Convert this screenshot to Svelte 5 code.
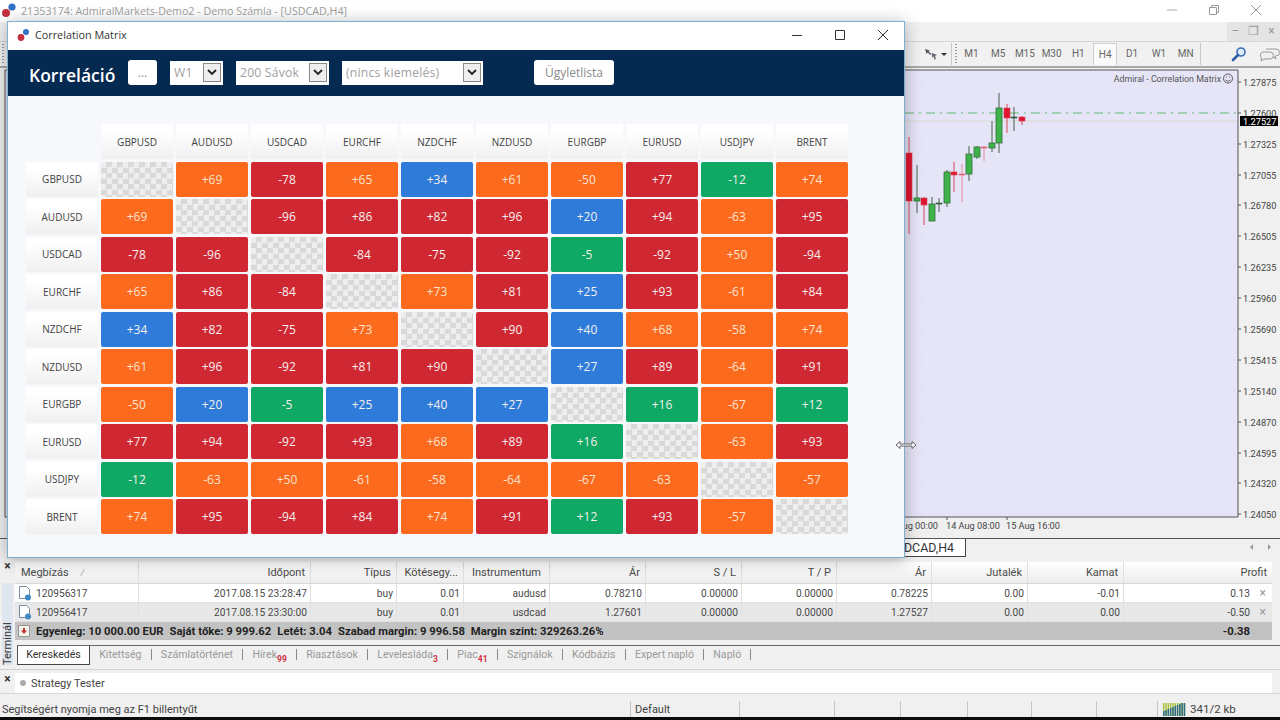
<script>
  const symbols = ['GBPUSD', 'AUDUSD', 'USDCAD', 'EURCHF', 'NZDCHF', 'NZDUSD', 'EURGBP', 'EURUSD', 'USDJPY', 'BRENT'];
  const matrix = [
    [null, 69, -78, 65, 34, 61, -50, 77, -12, 74],
    [69, null, -96, 86, 82, 96, 20, 94, -63, 95],
    [-78, -96, null, -84, -75, -92, -5, -92, 50, -94],
    [65, 86, -84, null, 73, 81, 25, 93, -61, 84],
    [34, 82, -75, 73, null, 90, 40, 68, -58, 74],
    [61, 96, -92, 81, 90, null, 27, 89, -64, 91],
    [-50, 20, -5, 25, 40, 27, null, 16, -67, 12],
    [77, 94, -92, 93, 68, 89, 16, null, -63, 93],
    [-12, -63, 50, -61, -58, -64, -67, -63, null, -57],
    [74, 95, -94, 84, 74, 91, 12, 93, -57, null]
  ];

  function level(v) {
    const a = Math.abs(v);
    if (a >= 75) return 'red';
    if (a >= 50) return 'orange';
    if (a >= 20) return 'blue';
    return 'green';
  }

  const fmt = (v) => (v > 0 ? '+' + v : '' + v);

  const periods = ['M1', 'M5', 'M15', 'M30', 'H1', 'H4', 'D1', 'W1', 'MN'];

  const priceLabels = [
    ['1.27875', 82], ['1.27600', 113], ['1.27325', 144], ['1.27055', 175],
    ['1.26780', 205], ['1.26505', 236], ['1.26235', 267], ['1.25960', 298],
    ['1.25690', 329], ['1.25415', 360], ['1.25140', 391], ['1.24870', 422],
    ['1.24595', 453], ['1.24320', 483], ['1.24050', 514]
  ];

  // x, high, low, body top, body bottom, kind
  const candles = [
    [909, 137, 234, 153, 201, 'down'],
    [917, 165, 213, 198, 201, 'up'],
    [924, 197, 225, 198, 205, 'down'],
    [932, 197, 221, 204, 221, 'up'],
    [939, 198, 212, 203, 204, 'doji'],
    [947, 170, 207, 172, 203, 'up'],
    [954, 162, 192, 172, 175, 'down'],
    [962, 164, 202, 174, 175, 'pink'],
    [969, 146, 181, 154, 174, 'up'],
    [977, 146, 159, 147, 157, 'up'],
    [984, 146, 161, 147, 148, 'pink'],
    [992, 121, 152, 143, 148, 'up'],
    [999, 93, 153, 108, 143, 'up'],
    [1007, 104, 133, 108, 118, 'down'],
    [1014, 107, 131, 117, 118, 'doji'],
    [1022, 116, 125, 117, 121, 'down']
  ];

  const columns = [
    ['Megbízás', 'l'], ['Időpont', 'r'], ['Típus', 'r'], ['Kötésegy...', 'r'], ['Instrumentum', 'c'],
    ['Ár', 'r'], ['S / L', 'r'], ['T / P', 'r'], ['Ár', 'r'], ['Jutalék', 'r'], ['Kamat', 'r'], ['Profit', 'r']
  ];

  const orders = [
    ['120956317', '2017.08.15 23:28:47', 'buy', '0.01', 'audusd', '0.78210', '0.00000', '0.00000', '0.78225', '0.00', '-0.01', '0.13'],
    ['120956417', '2017.08.15 23:30:00', 'buy', '0.01', 'usdcad', '1.27601', '0.00000', '0.00000', '1.27527', '0.00', '0.00', '-0.50']
  ];

  const termTabs = [
    ['Kitettség'], ['Számlatörténet'], ['Hírek', '99'], ['Riasztások'], ['Levelesláda', '3'],
    ['Piac', '41'], ['Szignálok'], ['Kódbázis'], ['Expert napló'], ['Napló']
  ];

  const trafficBars = [5, 6, 7, 8, 9, 10, 11, 12, 13, 14];
</script>

<div class="app">
  <header class="titlebar">
    <svg class="logo" width="20" height="20" viewBox="0 0 20 20">
      <circle cx="12" cy="6" r="3.6" fill="#3470c8" />
      <circle cx="6" cy="12" r="4" fill="#c5303f" />
    </svg>
    <span class="apptitle">21353174: AdmiralMarkets-Demo2 - Demo Számla - [USDCAD,H4]</span>
    <div class="sysbtns">
      <svg width="12" height="12" viewBox="0 0 12 12"><path d="M1 6h10" stroke="#aaa" /></svg>
      <svg width="12" height="12" viewBox="0 0 12 12"><path d="M1.500 3.500h7v7h-7zM3.500 3.500v-2h7v7h-2" fill="none" stroke="#999" /></svg>
      <svg width="12" height="12" viewBox="0 0 12 12"><path d="M1 1l10 10M11 1L1 11" stroke="#999" /></svg>
    </div>
  </header>

  <div class="mdibar">
    <div class="mdibtns">
      <span>–</span><span>❐</span><span>×</span>
    </div>
  </div>

  <div class="toolbar">
    <span class="tb-grip first-grip"></span>
    <svg class="tb-arrows" width="24" height="16" viewBox="0 0 24 16">
      <path d="M1 3l5 1.500-1.500 1 3 2.500-1 1-3-2.500-1 1.500z" fill="#555" />
      <path d="M8 7l5 2-2 1 1 3-1.500.5-1-3-1.500 1z" fill="#667" />
      <path d="M17 7h6l-3 3z" fill="#333" />
    </svg>
    <span class="tb-sep"></span>
    <span class="tb-grip"></span>
    <div class="periods">
      {#each periods as p}
        <span class="period" class:active={p === 'H4'}>{p}</span>
      {/each}
    </div>
    <span class="tb-sep"></span>
    <svg class="tb-search" width="16" height="16" viewBox="0 0 16 16">
      <circle cx="10" cy="6" r="4" fill="#dce9f7" stroke="#3a6fb5" stroke-width="1.600" />
      <path d="M7 9l-5 5" stroke="#2c5fa8" stroke-width="2.600" stroke-linecap="round" />
    </svg>
    <svg class="tb-chat" width="22" height="16" viewBox="0 0 22 16">
      <path d="M8 3h10a3 3 0 0 1 0 7h-1l1 3-4-3" fill="none" stroke="#999" />
      <path d="M5 6h7a3.500 3.500 0 0 1 0 7H6l-3 2 .5-3A3.500 3.500 0 0 1 5 6z" fill="#f0f0f0" stroke="#999" />
    </svg>
  </div>

  <div class="chart">
    <svg class="chart-svg" width="1280" height="470" viewBox="0 68 1280 470">
      <rect x="5" y="70" width="1233" height="447" fill="#e6e4f7" />
      {#each [950, 1010, 1070, 1130, 1190] as gx}
        <path d="M{gx} 70V517" stroke="#dcdaf0" stroke-dasharray="1 3" />
      {/each}
      {#each priceLabels as l}
        <path d="M905 {l[1]}H1238" stroke="#dcdaf0" stroke-dasharray="1 3" />
      {/each}
      <path d="M905 121H1238" stroke="#dcd9d2" />
      <path d="M905 113H1238" stroke="#5fbd74" stroke-dasharray="9 5 2 5" />

      {#each candles as c}
        <path
          d="M{c[0]} {c[1]}V{c[2]}"
          stroke={c[5] === 'down' ? '#d8475a' : c[5] === 'pink' ? '#e88a9c' : '#46604a'}
        />
        <rect
          class={c[5]}
          x={c[0] - 3}
          y={c[3]}
          width="6"
          height={c[4] - c[3]}
        />
      {/each}

      <path d="M5 70H1238V517H5z" fill="none" stroke="#555" />
      {#each priceLabels as l}
        <path d="M1238 {l[1]}h3" stroke="#555" />
        <text class="axis" x="1243" y={l[1] + 3.500}>{l[0]}</text>
      {/each}
      <rect x="1240" y="116" width="38" height="10" fill="#000" />
      <text class="axis last" x="1243" y="124.500">1.27527</text>

      <text class="chart-name" x="1221" y="81.500" text-anchor="end">Admiral - Correlation Matrix</text>
      <circle cx="1228" cy="78.500" r="4.500" fill="none" stroke="#555" />
      <path d="M1225.500 80q2.500 2.500 5 0M1226 77h1M1229 77h1" fill="none" stroke="#555" stroke-width=".8" />

      <path d="M947 517v3M1007 517v3" stroke="#555" />
      <text class="axis" x="938" y="528.500" text-anchor="end">13 Aug 00:00</text>
      <text class="axis" x="946" y="528.500">14 Aug 08:00</text>
      <text class="axis" x="1006" y="528.500">15 Aug 16:00</text>
    </svg>
  </div>

  <div class="chart-tabs">
    <span class="chart-tab">USDCAD,H4</span>
    <span class="tab-arrows">
      <svg width="5" height="8" viewBox="0 0 5 8"><path d="M4 1v6L1 4z" fill="#999" /></svg>
      <svg width="5" height="8" viewBox="0 0 5 8"><path d="M1 1v6l3-3z" fill="#999" /></svg>
    </span>
  </div>

  <section class="terminal">
    <aside class="term-side">
      <span class="side-x">×</span>
      <span class="side-label">Terminál</span>
    </aside>
    <div class="term-main">
      <div class="trow thead">
        {#each columns as col, i}
          <span class="tcell {col[1]}">
            {col[0]}{#if i === 0}<em class="sort">/</em>{/if}
          </span>
        {/each}
      </div>
      {#each orders as order, r}
        <div class="trow" class:alt={r === 1}>
          {#each order as val, i}
            <span class="tcell" class:r={i > 0} class:first={i === 0}>
              {#if i === 0}
                <svg class="doc" width="16" height="16" viewBox="0 0 16 16">
                  <path d="M2.500 1.500h7l3 3v9h-10z" fill="#fff" stroke="#7c8da0" />
                  <circle cx="11" cy="12.500" r="3" fill="#3b8ac4" />
                </svg>
              {/if}
              {val}
              {#if i === 11}<i class="rowx">×</i>{/if}
            </span>
          {/each}
        </div>
      {/each}
      <div class="balance">
        <svg width="12" height="12" viewBox="0 0 12 12">
          <rect x=".5" y=".5" width="11" height="11" fill="#f4f1ec" stroke="#999" />
          <path d="M6 9L3 5.500h2V3h2v2.500h2z" fill="#c5342c" />
        </svg>
        <b>Egyenleg: 10 000.00 EUR</b>
        <b>Saját tőke: 9 999.62</b>
        <b>Letét: 3.04</b>
        <b>Szabad margin: 9 996.58</b>
        <b>Margin szint: 329263.26%</b>
        <b class="sum">-0.38</b>
      </div>
      <nav class="term-tabs">
        <span class="term-tab active">Kereskedés</span>
        {#each termTabs as t}
          <span class="term-tab">{t[0]}{#if t[1]}<sub>{t[1]}</sub>{/if}</span>
          <span class="bar"></span>
        {/each}
      </nav>
    </div>
  </section>

  <section class="tester">
    <span class="side-x small">×</span>
    <div class="tester-box">
      <span class="dot"></span>
      Strategy Tester
    </div>
  </section>

  <footer class="status">
    <span class="st st-help">Segítségért nyomja meg az F1 billentyűt</span>
    <span class="st st-default">Default</span>
    <span class="st w95"></span>
    <span class="st w66"></span>
    <span class="st w67"></span>
    <span class="st w64"></span>
    <span class="st w65"></span>
    <span class="st w61"></span>
    <span class="st st-net">
      <svg width="23" height="13" viewBox="0 0 23 13">
        {#each trafficBars as h, i}
          <rect x={i * 2.300} y="0" width="1.500" height="13" fill="#a9c244" />
          <rect x={i * 2.300} y={13 - h} width="1.500" height={h} fill="#2c6a86" />
        {/each}
      </svg>
      341/2 kb
    </span>
  </footer>
  <div class="blackline"></div>

  <div class="window">
    <div class="win-title">
      <svg width="16" height="16" viewBox="0 0 16 16">
        <circle cx="10" cy="5" r="3" fill="#3470c8" />
        <circle cx="5" cy="10.500" r="3.400" fill="#c5303f" />
      </svg>
      <span>Correlation Matrix</span>
      <div class="win-btns">
        <svg width="12" height="12" viewBox="0 0 12 12"><path d="M1 6.500h10" stroke="#333" /></svg>
        <svg width="12" height="12" viewBox="0 0 12 12"><path d="M1.500 1.500h9v9h-9z" fill="none" stroke="#333" /></svg>
        <svg width="12" height="12" viewBox="0 0 12 12"><path d="M1 1l10 10M11 1L1 11" stroke="#333" /></svg>
      </div>
    </div>
    <div class="banner">
      <h1>Korreláció</h1>
      <button class="btn dots">...</button>
      <div class="select s1">W1<span class="arrow"><svg width="10" height="7" viewBox="0 0 10 7"><path d="M1 1l4 4 4-4" fill="none" stroke="#222" stroke-width="1.800" /></svg></span></div>
      <div class="select s2">200 Sávok<span class="arrow"><svg width="10" height="7" viewBox="0 0 10 7"><path d="M1 1l4 4 4-4" fill="none" stroke="#222" stroke-width="1.800" /></svg></span></div>
      <div class="select s3">(nincs kiemelés)<span class="arrow"><svg width="10" height="7" viewBox="0 0 10 7"><path d="M1 1l4 4 4-4" fill="none" stroke="#222" stroke-width="1.800" /></svg></span></div>
      <button class="btn deals">Ügyletlista</button>
    </div>
    <div class="matrix">
      <div class="grid">
        <span class="corner"></span>
        {#each symbols as s}
          <span class="label">{s}</span>
        {/each}
        {#each matrix as row, r}
          <span class="label">{symbols[r]}</span>
          {#each row as v}
            {#if v === null}
              <span class="cell empty"></span>
            {:else}
              <span class="cell {level(v)}">{fmt(v)}</span>
            {/if}
          {/each}
        {/each}
      </div>
    </div>
  </div>

  <svg class="cursor" width="22" height="10" viewBox="0 0 22 10">
    <path d="M1 5l4-3.500v2.500h12V1.500L21 5l-4 3.500V6H5v2.500z" fill="#fff" stroke="#555" stroke-width=".9" />
  </svg>
</div>

<style>
  :global(body) {
    margin: 0;
    background: #f0f0f0;
  }

  .app {
    position: relative;
    width: 1280px;
    height: 720px;
    overflow: hidden;
    display: flex;
    flex-direction: column;
    background: #f0f0f0;
    font-family: Roboto, "Liberation Sans", sans-serif;
    font-size: 10.5px;
    color: #444;
  }

  .titlebar {
    height: 22px;
    flex: none;
    background: #fff;
    display: flex;
    align-items: center;
  }

  .apptitle {
    font-family: "Open Sans", sans-serif;
    font-size: 10.700px;
    color: #a0a0a0;
    margin-left: 1px;
  }

  .sysbtns {
    margin-left: auto;
    display: flex;
    gap: 30px;
    padding-right: 18px;
    margin-top: -3px;
  }

  .mdibar {
    height: 19px;
    flex: none;
    background: #f1f1f1;
    display: flex;
    justify-content: flex-end;
  }

  .mdibtns {
    display: flex;
    gap: 1px;
    color: #999;
    background: #e6e6e6;
    font-size: 12px;
  }

  .mdibtns span {
    width: 17px;
    text-align: center;
    background: #e4e4e4;
    line-height: 19px;
  }

  .toolbar {
    height: 27px;
    flex: none;
    display: flex;
    align-items: center;
    padding-left: 2px;
    box-sizing: border-box;
    background: #f1f1f1;
    border-top: 1px solid #d6d6d6;
    border-bottom: 2px solid #a9a9a9;
  }

  .tb-arrows {
    margin-left: 920px;
    margin-right: 3px;
  }

  .tb-sep {
    width: 1px;
    height: 22px;
    background: #c8c8c8;
  }

  .tb-grip {
    width: 2px;
    height: 20px;
    margin-left: 3px;
    background: repeating-linear-gradient(#999 0 1px, transparent 1px 3px);
  }

  .first-grip {
    margin-left: 0;
  }

  .periods {
    display: flex;
    margin-left: 1px;
    margin-right: 1px;
  }

  .period {
    width: 26.750px;
    text-align: center;
    font-size: 10px;
    line-height: 22px;
    color: #666;
    box-sizing: border-box;
  }

  .period.active {
    background: #fafafa;
    border: 1px solid #cfcfcf;
    border-bottom: none;
    line-height: 21px;
    width: 24px;
    margin: 0 1.500px;
  }

  .tb-search {
    margin-left: 30px;
  }

  .tb-chat {
    margin-left: 11px;
  }

  .chart {
    height: 470px;
    flex: none;
    background: #f0f0f0;
  }

  .chart-svg {
    display: block;
  }

  .up {
    fill: #3fb24a;
    stroke: #2f6e38;
    stroke-width: 0.8;
  }

  .down {
    fill: #e0142f;
    stroke: #d8475a;
    stroke-width: 0.6;
  }

  .doji {
    fill: #2f5a35;
    stroke: #2f5a35;
    stroke-width: 0.6;
  }

  .pink {
    fill: #e0607a;
    stroke: #e0607a;
    stroke-width: 0.6;
  }

  .axis {
    font-size: 9.200px;
    fill: #444;
  }

  .axis.last {
    fill: #fff;
  }

  .chart-name {
    font-size: 8.800px;
    fill: #555;
  }

  .chart-tabs {
    height: 21px;
    flex: none;
    box-sizing: border-box;
    display: flex;
    align-items: flex-start;
    background: #f0f0f0;
    border-top: 1px solid #555;
  }

  .chart-tab {
    margin-left: 860px;
    width: 106px;
    height: 18px;
    box-sizing: border-box;
    background: #fff;
    border-right: 1px solid #444;
    border-bottom: 1px solid #444;
    text-align: right;
    padding-right: 11px;
    font-size: 12.400px;
    line-height: 18px;
    color: #333;
  }

  .tab-arrows {
    margin-left: auto;
    display: flex;
    gap: 13px;
    padding: 4px 8px 0 0;
  }

  .terminal {
    height: 110px;
    flex: none;
    display: flex;
    background: #f0f0f0;
  }

  .term-side {
    width: 15px;
    flex: none;
    display: flex;
    flex-direction: column;
    align-items: center;
    position: relative;
  }

  .side-x {
    font-weight: 700;
    font-size: 12px;
    color: #333;
    line-height: 12px;
    margin-top: 1px;
  }

  .side-label {
    writing-mode: vertical-rl;
    transform: rotate(180deg);
    margin-top: auto;
    width: 11px;
    height: 82px;
    margin-bottom: 4px;
    background: #dfe6f0;
    text-align: left;
    font-size: 11px;
    line-height: 11px;
    color: #333;
    padding-top: 0;
    box-sizing: border-box;
  }

  .term-main {
    flex: 1;
    min-width: 0;
    padding: 3px 8px 0 0;
    display: flex;
    flex-direction: column;
  }

  .trow {
    display: grid;
    grid-template-columns: 124px 172px 86px 67px 86px 96px 96px 95px 95px 96px 96px 148px;
    height: 19px;
    background: #fff;
    border-bottom: 1px solid #e0e0e0;
    box-sizing: border-box;
    align-items: center;
  }

  .trow.alt {
    background: #e8e8e8;
  }

  .thead {
    height: 22px;
    background: linear-gradient(#fff, #ececec);
    border-bottom: 1px solid #d8d8d8;
  }

  .tcell {
    height: 100%;
    padding: 0 3px;
    box-sizing: border-box;
    border-right: 1px solid #e0e0e0;
    display: flex;
    align-items: center;
    white-space: nowrap;
    position: relative;
    font-size: 10.200px;
    color: #4a4a4a;
  }

  .thead .tcell {
    padding: 0 5px;
    font-size: 11px;
  }

  .tcell.r {
    justify-content: flex-end;
  }

  .tcell.c {
    justify-content: center;
  }

  .thead .tcell.l {
    padding-left: 6px;
  }

  .sort {
    margin-left: 12px;
    font-size: 9px;
    color: #aaa;
  }

  .first {
    padding-left: 2px;
    gap: 3px;
  }

  .trow > .tcell:last-child {
    border-right: none;
    padding-right: 22px;
  }

  .thead > .tcell:last-child {
    padding-right: 5px;
  }

  .rowx {
    position: absolute;
    right: 6px;
    font-style: normal;
    font-size: 12px;
    color: #9a9a9a;
  }

  .balance {
    height: 18px;
    background: #c2c2c2;
    display: flex;
    align-items: center;
    gap: 6px;
    padding-left: 3px;
    color: #222;
    font-size: 11.300px;
    position: relative;
  }

  .balance b {
    font-weight: 700;
  }

  .sum {
    position: absolute;
    right: 22px;
  }

  .term-tabs {
    margin-top: 5px;
    height: 20px;
    margin-left: 2px;
    margin-right: -8px;
    display: flex;
    align-items: flex-start;
    gap: 9.200px;
    border-top: 1px solid #666;
  }

  .term-tab {
    font-size: 10.600px;
    line-height: 17px;
    color: #999;
    white-space: nowrap;
  }

  .term-tab sub {
    font-size: 8.500px;
    font-weight: 700;
    color: #d0303f;
    vertical-align: -4px;
    line-height: 0;
  }

  .term-tab.active {
    color: #333;
    background: #fff;
    border-left: 1px solid #555;
    border-right: 1px solid #444;
    border-bottom: 1px solid #444;
    height: 19px;
    width: 73px;
    text-align: center;
    box-sizing: border-box;
  }

  .bar {
    width: 1px;
    height: 11px;
    margin-top: 3px;
    background: #888;
  }

  .tester {
    height: 24px;
    flex: none;
    display: flex;
    align-items: flex-end;
    border-top: 1px solid #d0d0d0;
    box-sizing: border-box;
  }

  .side-x.small {
    width: 15px;
    text-align: center;
    align-self: flex-start;
    margin-top: 3px;
  }

  .tester-box {
    width: 1257px;
    height: 20px;
    background: #fff;
    display: flex;
    align-items: center;
    gap: 5px;
    padding-left: 5px;
    box-sizing: border-box;
    font-size: 11px;
    color: #444;
  }

  .dot {
    width: 6px;
    height: 6px;
    border-radius: 50%;
    background: #aaa;
  }

  .status {
    height: 24px;
    flex: none;
    display: flex;
    align-items: flex-end;
    box-sizing: border-box;
    background: #f0f0f0;
    border-top: 1px solid #d8d8d8;
    font-size: 11px;
    color: #444;
  }

  .st {
    height: 16px;
    line-height: 18px;
    box-sizing: border-box;
    border-right: 1px solid #c4c4c4;
    flex: none;
  }

  .st-help {
    width: 631px;
    padding-left: 2px;
  }

  .st-default {
    width: 109px;
    padding-left: 4px;
  }

  .w95 { width: 95px; }
  .w66 { width: 66px; }
  .w67 { width: 67px; }
  .w64 { width: 64px; }
  .w65 { width: 65px; }
  .w61 { width: 61px; }

  .st-net {
    border: none;
    display: flex;
    align-items: center;
    gap: 4px;
    padding-left: 5px;
    font-size: 11.500px;
  }

  .blackline {
    height: 3px;
    flex: none;
    background: #0c0c0c;
  }

  .window {
    position: absolute;
    left: 7px;
    top: 21px;
    width: 898px;
    height: 537px;
    box-sizing: border-box;
    border: 1px solid #80aece;
    background: #f6f8fc;
    box-shadow: 0 2px 16px rgba(0, 0, 0, 0.3);
    display: flex;
    flex-direction: column;
    font-family: "Open Sans", sans-serif;
  }

  .win-title {
    height: 28px;
    flex: none;
    box-sizing: border-box;
    padding: 0 0 3px 8px;
    background: #fff;
    display: flex;
    align-items: center;
    font-size: 10.800px;
    color: #333;
    gap: 3px;
  }

  .win-btns {
    margin-left: auto;
    display: flex;
    gap: 31px;
    padding-right: 15px;
  }

  .banner {
    height: 46px;
    flex: none;
    background: #052a52;
    display: flex;
    align-items: center;
    padding-left: 21px;
  }

  h1 {
    margin: 4px 0 0;
    width: 99px;
    font-size: 17.500px;
    font-weight: 600;
    color: #fff;
    white-space: nowrap;
  }

  .btn {
    height: 25px;
    background: #fff;
    border: none;
    border-radius: 3px;
    font-family: inherit;
    font-size: 12px;
    color: #8a8a8a;
    padding: 0;
    margin-top: -1px;
  }

  .dots {
    width: 29px;
    margin-right: 13px;
  }

  .deals {
    width: 80px;
    margin-left: 51px;
  }

  .select {
    height: 24px;
    background: #fff;
    display: flex;
    align-items: center;
    justify-content: space-between;
    box-sizing: border-box;
    padding: 0 2px 0 4px;
    font-size: 12.200px;
    letter-spacing: 0.2px;
    color: #a0a0a0;
    margin-right: 13px;
    margin-top: -1px;
  }

  .s1 { width: 53px; }
  .s2 { width: 93px; }
  .s3 { width: 141px; margin-right: 0; }

  .arrow {
    width: 18px;
    height: 19px;
    box-sizing: border-box;
    background: #eee;
    border: 1px solid #8a8a8a;
    display: flex;
    align-items: center;
    justify-content: center;
  }

  .matrix {
    flex: 1;
    padding: 28px 0 0 18px;
  }

  .grid {
    display: grid;
    grid-template-columns: repeat(11, 72px);
    grid-auto-rows: 35px;
    gap: 2.500px 3px;
  }

  .label {
    display: flex;
    align-items: center;
    justify-content: center;
    font-size: 10px;
    color: #444;
    background: linear-gradient(#fff 20%, #f0f0f0);
  }

  .corner {
    display: block;
  }

  .cell {
    display: flex;
    align-items: center;
    justify-content: center;
    border-radius: 2px;
    font-size: 12px;
    color: #f4f0ee;
  }

  .red { background: #d02833; }
  .orange { background: #fc6a1e; color: #fbe3cf; }
  .blue { background: #2f7bd9; }
  .green { background: #0fa864; }

  .empty {
    background: repeating-conic-gradient(#d9d9d9 0 25%, #eeeeee 0 50%) 0 0 / 11px 11px;
  }

  .cursor {
    position: absolute;
    left: 895px;
    top: 440px;
  }
</style>
